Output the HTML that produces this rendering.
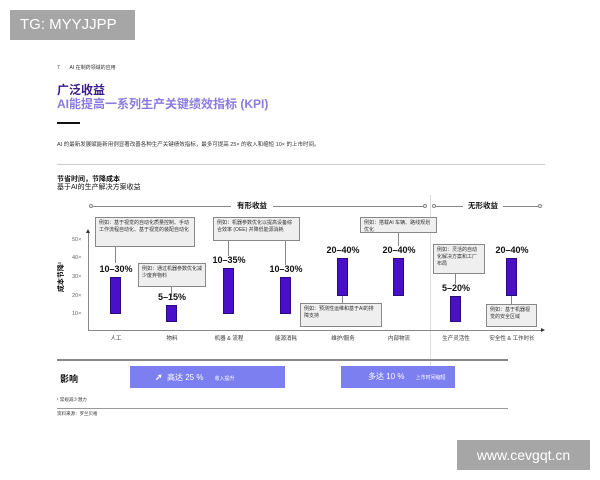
<!DOCTYPE html><html><head><meta charset="utf-8"><style>
*{margin:0;padding:0;box-sizing:border-box}
body{width:600px;height:480px;background:#fff;position:relative;overflow:hidden;font-family:"Liberation Sans","Noto Sans CJK SC",sans-serif;color:#111}
.a{position:absolute;white-space:nowrap}
.bar{position:absolute;width:11px;background:#4a0fc8;border:1px solid #2a0a80}
.pct{position:absolute;font-size:9px;font-weight:bold;width:60px;text-align:center}
.box{position:absolute;background:#efefef;border:1px solid #888;font-size:5px;line-height:7px;padding:2px 3px;color:#333;white-space:normal}
.cat{position:absolute;font-size:5.5px;color:#333;width:70px;text-align:center}
.yl{position:absolute;font-size:5.5px;color:#666;left:72px}
.vl{position:absolute;width:1px;background:#888}
</style></head><body>
<div class="a" style="left:10px;top:10px;width:125px;height:30px;background:#a6a6a6;color:#fff;font-size:15px;line-height:30px;padding-left:10px">TG: MYYJJPP</div>
<div class="a" style="left:57px;top:64px;font-size:5px;color:#333">7 &nbsp;&nbsp;&nbsp;&nbsp;&nbsp;&nbsp;AI 在制药领域的应用</div>
<div class="a" style="left:57px;top:81px;font-size:12px;font-weight:bold;color:#3a1a8c">广泛收益</div>
<div class="a" style="left:57px;top:95px;font-size:12px;color:#8a7be0;font-weight:bold">AI能提高一系列生产关键绩效指标 (KPI)</div>
<div class="a" style="left:57px;top:122px;width:23px;height:2px;background:#111"></div>
<div class="a" style="left:57px;top:140px;font-size:5.5px;color:#333">AI 的最新发展赋能新用例显著改善各种生产关键绩效指标，最多可提高 25× 的收入和缩短 10× 的上市时间。</div>
<div class="a" style="left:57px;top:164px;width:488px;height:1px;background:#ccc"></div>
<div class="a" style="left:57px;top:174px;font-size:7px;font-weight:bold">节省时间，节降成本</div>
<div class="a" style="left:57px;top:182px;font-size:7px">基于AI的生产解决方案收益</div>
<div class="a" style="left:90px;top:206px;width:335px;height:1px;background:#888"></div>
<div class="a" style="left:89px;top:204px;width:4px;height:4px;border:1px solid #888;border-radius:50%;background:#fff"></div>
<div class="a" style="left:423px;top:204px;width:4px;height:4px;border:1px solid #888;border-radius:50%;background:#fff"></div>
<div class="a" style="left:231px;top:200px;background:#fff;padding:0 6px;font-size:7.5px;font-weight:bold">有形收益</div>
<div class="a" style="left:433px;top:206px;width:107px;height:1px;background:#888"></div>
<div class="a" style="left:432px;top:204px;width:4px;height:4px;border:1px solid #888;border-radius:50%;background:#fff"></div>
<div class="a" style="left:538px;top:204px;width:4px;height:4px;border:1px solid #888;border-radius:50%;background:#fff"></div>
<div class="a" style="left:463px;top:200px;background:#fff;padding:0 5px;font-size:7.5px;font-weight:bold">无形收益</div>
<div class="a" style="left:430px;top:195px;width:1px;height:170px;background:#ddd"></div>
<div class="a" style="left:88px;top:232px;width:1px;height:98px;background:#888"></div>
<div class="a" style="left:86px;top:229px;width:0;height:0;border-left:2px solid transparent;border-right:2px solid transparent;border-bottom:4px solid #333"></div>
<div class="a" style="left:88px;top:330px;width:455px;height:1px;background:#888"></div>
<div class="a" style="left:541px;top:328px;width:0;height:0;border-top:2px solid transparent;border-bottom:2px solid transparent;border-left:4px solid #333"></div>
<div class="yl" style="top:237px">50×</div><div class="yl" style="top:255px">40×</div><div class="yl" style="top:274px">30×</div><div class="yl" style="top:293px">20×</div><div class="yl" style="top:311px">10×</div>
<div class="a" style="left:41px;top:272px;width:40px;text-align:center;font-size:7px;font-weight:bold;transform:rotate(-90deg);transform-origin:center">成本节降¹</div>
<div class="vl" style="left:115px;top:247px;height:16px"></div>
<div class="vl" style="left:171px;top:287px;height:10px"></div>
<div class="vl" style="left:228px;top:241px;height:15px"></div>
<div class="vl" style="left:285px;top:241px;height:24px"></div>
<div class="vl" style="left:342px;top:296px;height:8px"></div>
<div class="vl" style="left:398px;top:233px;height:13px"></div>
<div class="vl" style="left:455px;top:274px;height:10px"></div>
<div class="vl" style="left:511px;top:296px;height:8px"></div>
<div class="box" style="left:95px;top:217px;width:100px;height:30px">例如：基于视觉的自动化质量控制、手动工作流程自动化、基于视觉的装配自动化</div>
<div class="box" style="left:138px;top:263px;width:68px;height:24px">例如：通过机器参数优化减少废弃物料</div>
<div class="box" style="left:213px;top:217px;width:87px;height:24px">例如：机器参数优化以提高设备综合效率 (OEE) 并降低能源消耗</div>
<div class="box" style="left:300px;top:303px;width:82px;height:24px">例如：预测性运维和基于AI的排障支持</div>
<div class="box" style="left:360px;top:217px;width:77px;height:16px">例如：搭载AI 车辆、路线规划优化</div>
<div class="box" style="left:433px;top:244px;width:52px;height:30px">例如：灵活的自动化解决方案和工厂布局</div>
<div class="box" style="left:486px;top:304px;width:51px;height:23px">例如：基于机器视觉的安全区域</div>
<div class="bar" style="left:110px;top:277px;height:37px"></div>
<div class="bar" style="left:166px;top:305px;height:17px"></div>
<div class="bar" style="left:223px;top:268px;height:46px"></div>
<div class="bar" style="left:280px;top:277px;height:37px"></div>
<div class="bar" style="left:337px;top:258px;height:38px"></div>
<div class="bar" style="left:393px;top:258px;height:38px"></div>
<div class="bar" style="left:450px;top:296px;height:26px"></div>
<div class="bar" style="left:506px;top:258px;height:38px"></div>
<div class="pct" style="left:86px;top:264px">10–30%</div>
<div class="pct" style="left:142px;top:292px">5–15%</div>
<div class="pct" style="left:199px;top:255px">10–35%</div>
<div class="pct" style="left:256px;top:264px">10–30%</div>
<div class="pct" style="left:313px;top:245px">20–40%</div>
<div class="pct" style="left:369px;top:245px">20–40%</div>
<div class="pct" style="left:426px;top:283px">5–20%</div>
<div class="pct" style="left:482px;top:245px">20–40%</div>
<div class="cat" style="left:81px;top:334px">人工</div>
<div class="cat" style="left:137px;top:334px">物料</div>
<div class="cat" style="left:194px;top:334px">机器 &amp; 流程</div>
<div class="cat" style="left:251px;top:334px">能源消耗</div>
<div class="cat" style="left:308px;top:334px">维护/服务</div>
<div class="cat" style="left:364px;top:334px">内部物流</div>
<div class="cat" style="left:421px;top:334px">生产灵活性</div>
<div class="cat" style="left:477px;top:334px">安全性 &amp; 工作时长</div>
<div class="a" style="left:57px;top:359px;width:451px;height:2px;background:#888"></div>
<div class="a" style="left:60px;top:372px;font-size:9px;font-weight:bold">影响</div>
<div class="a" style="left:130px;top:366px;width:155px;height:22px;background:#7b7ff0;color:#fff;font-size:8px;line-height:22px;padding-left:25px"><span style="font-weight:bold;font-size:9px">➚</span>&nbsp;&nbsp;高达 25 %&nbsp;&nbsp;&nbsp;&nbsp;&nbsp;<span style="font-size:5px">收入提升</span></div>
<div class="a" style="left:341px;top:366px;width:114px;height:22px;background:#7b7ff0;color:#fff;font-size:8px;line-height:22px;padding-left:27px">多达 10 %&nbsp;&nbsp;&nbsp;&nbsp;&nbsp;<span style="font-size:5px">上市时间缩短</span></div>
<div class="a" style="left:57px;top:397px;font-size:4.5px;color:#333">¹ 常规减少潜力</div>
<div class="a" style="left:57px;top:408px;width:451px;height:1px;background:#999"></div>
<div class="a" style="left:57px;top:411px;font-size:4.5px;color:#333">资料来源：罗兰贝格</div>
<div class="a" style="left:457px;top:440px;width:133px;height:30px;background:#a6a6a6;color:#fff;font-size:14px;line-height:30px;text-align:center">www.cevgqt.cn</div>
</body></html>
